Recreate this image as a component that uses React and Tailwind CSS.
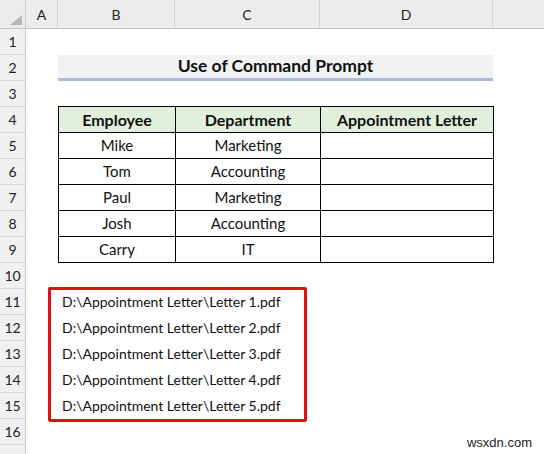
import React from 'react';

const rows = [
    { name: 'Mike', dept: 'Marketing' },
    { name: 'Tom', dept: 'Accounting' },
    { name: 'Paul', dept: 'Marketing' },
    { name: 'Josh', dept: 'Accounting' },
    { name: 'Carry', dept: 'IT' },
];

const rowNums = Array.from({ length: 16 }, (_, i) => i + 1);

export default function App() {
    return (
        <div className="relative w-[544px] h-[454px] overflow-hidden bg-white text-[#111]" style={{ fontFamily: 'Lato, "Open Sans", sans-serif' }}>
            {/* column header */}
            <div className="flex h-[29px] bg-[#ececec] border-b border-[#c6c6c6] text-[14px] text-[#222]">
                <div className="relative w-[26px] border-r border-[#c6c6c6]">
                    <div className="absolute right-[3px] bottom-[3px] w-0 h-0 border-l-[12px] border-l-transparent border-b-[10px] border-b-[#b6b6b6]" />
                </div>
                <div className="w-[32px] flex items-center justify-center border-r border-[#d2d2d2]">A</div>
                <div className="w-[117px] flex items-center justify-center border-r border-[#d2d2d2]">B</div>
                <div className="w-[145px] flex items-center justify-center border-r border-[#d2d2d2]">C</div>
                <div className="w-[173px] flex items-center justify-center border-r border-[#d2d2d2]">D</div>
                <div className="flex-1" />
            </div>

            <div className="flex">
                {/* row header */}
                <div className="w-[26px] h-[430px] bg-[#f0f0f0] border-r border-[#c6c6c6] flex flex-col">
                    {rowNums.map((n) => (
                        <div key={n} className="h-[26px] flex items-center justify-center text-[14px] text-[#222] border-b border-[#d6d6d6]">
                            {n}
                        </div>
                    ))}
                </div>

                {/* sheet body */}
                <div className="flex-1 flex flex-col">
                    <div className="h-[26px]" />
                    <div className="h-[26px] ml-[32px] w-[435px] bg-[#f2f2f2] border-b-[3px] border-[#a7b9dc] flex items-center justify-center font-bold text-[17.5px]">
                        Use of Command Prompt
                    </div>
                    <div className="h-[25px]" />

                    <div className="ml-[32px] w-[436px] border border-black text-[15px]">
                        <div className="flex h-[25px] bg-[#e2efda] font-bold text-[16px]">
                            <div className="w-[117px] flex items-center justify-center border-r border-black">Employee</div>
                            <div className="w-[145px] flex items-center justify-center border-r border-black">Department</div>
                            <div className="flex-1 flex items-center justify-center">Appointment Letter</div>
                        </div>
                        {rows.map((r) => (
                            <div key={r.name} className="flex h-[26px] border-t border-black">
                                <div className="w-[117px] flex items-center justify-center border-r border-black">{r.name}</div>
                                <div className="w-[145px] flex items-center justify-center border-r border-black">{r.dept}</div>
                                <div className="flex-1" />
                            </div>
                        ))}
                    </div>

                    <div className="h-[24px]" />

                    <div className="ml-[22px] w-[259px] h-[135px] border-[3px] border-[#e01010] rounded-[2px] pl-[11px] text-[14px]">
                        <div className="-mt-[2px] flex flex-col">
                            {[1, 2, 3, 4, 5].map((n) => (
                                <div key={n} className="h-[26px] flex items-center whitespace-nowrap">
                                    D:\Appointment Letter\Letter {n}.pdf
                                </div>
                            ))}
                        </div>
                    </div>
                </div>
            </div>

            <div className="absolute right-[12px] bottom-[2px] text-[13px] text-[#222]" style={{ fontFamily: '"Liberation Sans", Arial, sans-serif' }}>
                wsxdn.com
            </div>
        </div>
    );
}
